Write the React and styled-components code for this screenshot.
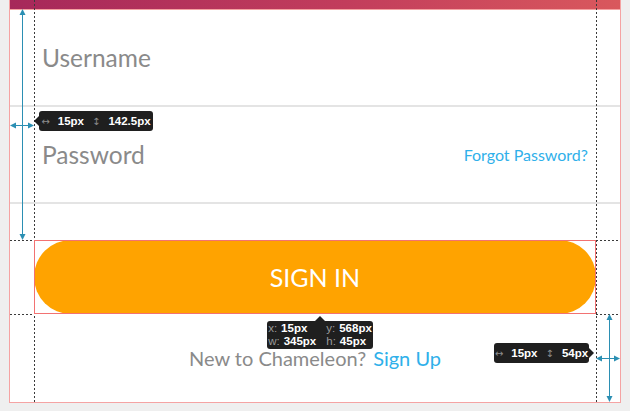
import React from 'react';
import styled, { createGlobalStyle, css } from 'styled-components';

const GlobalStyle = createGlobalStyle`
  html, body {
    margin: 0;
    padding: 0;
    background: #efefef;
  }
  body {
    font-family: Lato, "Open Sans", sans-serif;
  }
`;

const BLUE = '#2fb0ea';
const GRAY = '#8a8a8a';
const GUIDE = '#2b8fb3';

const Artboard = styled.div`
  position: relative;
  box-sizing: border-box;
  margin-left: 9px;
  width: 612px;
  height: 403px;
  background: #fff;
  border: 1px solid #f5a3a3;
  border-top: none;
  display: flex;
  flex-direction: column;
`;

const Header = styled.div`
  height: 9px;
  flex-shrink: 0;
  background: linear-gradient(90deg, #a6285a 0%, #c23d5c 55%, #d9585d 100%);
  border-bottom: 1px solid #f5a3a3;
`;

const Field = styled.div`
  box-sizing: border-box;
  flex-shrink: 0;
  height: 97px;
  border-bottom: 2px solid #e4e4e4;
  padding: 0 32px;
  display: flex;
  align-items: center;
  justify-content: space-between;
`;

const Placeholder = styled.span`
  font-size: 24.5px;
  color: ${GRAY};
`;

const Link = styled.span`
  color: ${BLUE};
  font-size: ${p => p.$size || 16}px;
`;

const Spacer = styled.div`
  flex-shrink: 0;
  height: 36px;
`;

const Button = styled.div`
  flex-shrink: 0;
  margin: 0 24px;
  height: 74px;
  border-radius: 37px;
  background: #ffa300;
  color: #fff;
  font-size: 25px;
  display: flex;
  align-items: center;
  justify-content: center;
`;

const Footer = styled.div`
  flex-shrink: 0;
  height: 88px;
  display: flex;
  align-items: center;
  justify-content: center;
  gap: 7px;
  font-size: 20px;
  color: ${GRAY};
`;

/* --- inspector overlay --- */

const Overlay = styled.div`
  position: absolute;
  inset: 0;
  pointer-events: none;
`;

const VDash = styled.div`
  position: absolute;
  left: ${p => p.$x}px;
  top: ${p => p.$y}px;
  width: 1px;
  height: ${p => p.$len}px;
  background-image: repeating-linear-gradient(to bottom, #3a3a3a 0 2px, transparent 2px 4px);
`;

const HDash = styled.div`
  position: absolute;
  left: ${p => p.$x}px;
  top: ${p => p.$y}px;
  height: 1px;
  width: ${p => p.$len}px;
  background-image: repeating-linear-gradient(to right, #3a3a3a 0 2px, transparent 2px 4px);
`;

const Selection = styled.div`
  position: absolute;
  left: 24px;
  top: 240px;
  width: 562px;
  height: 74px;
  box-sizing: border-box;
  border: 1px solid #f27272;
`;

const MeasureSvg = styled.svg`
  position: absolute;
  overflow: visible;
`;

const Measure = ({ x, y, len, vertical }) => {
  const w = vertical ? 9 : len;
  const h = vertical ? len : 9;
  const style = vertical
    ? { left: x - 4, top: y, width: w, height: h }
    : { left: x, top: y - 4, width: w, height: h };
  return (
    <MeasureSvg style={style} viewBox={`0 0 ${w} ${h}`}>
      {vertical ? (
        <g fill={GUIDE} stroke={GUIDE}>
          <line x1="4.5" y1="1" x2="4.5" y2={len - 1} strokeWidth="1" />
          <path d="M4.5 0 L1.5 6 L7.5 6 Z" stroke="none" />
          <path d={`M4.5 ${len} L1.5 ${len - 6} L7.5 ${len - 6} Z`} stroke="none" />
        </g>
      ) : (
        <g fill={GUIDE} stroke={GUIDE}>
          <line x1="1" y1="4.5" x2={len - 1} y2="4.5" strokeWidth="1" />
          <path d="M0 4.5 L6 1.5 L6 7.5 Z" stroke="none" />
          <path d={`M${len} 4.5 L${len - 6} 1.5 L${len - 6} 7.5 Z`} stroke="none" />
        </g>
      )}
    </MeasureSvg>
  );
};

const Tip = styled.div`
  position: absolute;
  left: ${p => p.$x}px;
  top: ${p => p.$y}px;
  width: ${p => p.$w}px;
  height: ${p => p.$h}px;
  box-sizing: border-box;
  background: #1f1f1f;
  border-radius: 3px;
  color: #fff;
  font-family: "Liberation Sans", "DejaVu Sans", sans-serif;
  font-weight: bold;
  font-size: 11.5px;
  display: flex;
  align-items: center;
  justify-content: center;
  gap: 8px;

  &::before {
    content: '';
    position: absolute;
    border: 5px solid transparent;
    ${p => p.$point === 'left' && css`
      right: 100%;
      top: 50%;
      margin-top: -5px;
      border-right-color: #1f1f1f;
    `}
    ${p => p.$point === 'right' && css`
      left: 100%;
      top: 50%;
      margin-top: -5px;
      border-left-color: #1f1f1f;
    `}
    ${p => p.$point === 'up' && css`
      bottom: 100%;
      left: 50%;
      margin-left: -5px;
      border-bottom-color: #1f1f1f;
    `}
  }
`;

const Glyph = styled.span`
  color: #8c8c8c;
  font-family: "DejaVu Sans", sans-serif;
  font-weight: normal;
  font-size: 10px;
`;

const TipGrid = styled.div`
  display: grid;
  grid-template-columns: auto auto;
  column-gap: 10px;
  line-height: 13px;
`;

const Key = styled.span`
  color: #9a9a9a;
  font-weight: normal;
  margin-right: 4px;
`;

const SizeTip = ({ x, y, w, point, width, height }) => (
  <Tip $x={x} $y={y} $w={w} $h={20} $point={point}>
    <Glyph>↔</Glyph>
    <span>{width}</span>
    <Glyph>↕</Glyph>
    <span>{height}</span>
  </Tip>
);

export default function App() {
  return (
    <>
      <GlobalStyle />
      <Artboard>
        <Header />
        <Field>
          <Placeholder>Username</Placeholder>
        </Field>
        <Field>
          <Placeholder>Password</Placeholder>
          <Link>Forgot Password?</Link>
        </Field>
        <Spacer />
        <Button>SIGN IN</Button>
        <Footer>
          <span>New to Chameleon?</span>
          <Link $size={20}>Sign Up</Link>
        </Footer>

        <Overlay>
          <VDash $x={24} $y={0} $len={402} />
          <VDash $x={586} $y={0} $len={402} />
          <HDash $x={0} $y={240} $len={24} />
          <HDash $x={586} $y={240} $len={24} />
          <HDash $x={0} $y={314} $len={24} />
          <HDash $x={586} $y={314} $len={24} />
          <Selection />

          <Measure vertical x={12} y={9} len={231} />
          <Measure x={0} y={125} len={24} />
          <Measure vertical x={599} y={314} len={88} />
          <Measure x={586} y={358} len={24} />

          <SizeTip x={29} y={111} w={114} point="left" width="15px" height="142.5px" />
          <SizeTip x={484} y={343} w={95} point="right" width="15px" height="54px" />

          <Tip $x={257} $y={321} $w={106} $h={28} $point="up">
            <TipGrid>
              <span><Key>x:</Key>15px</span>
              <span><Key>y:</Key>568px</span>
              <span><Key>w:</Key>345px</span>
              <span><Key>h:</Key>45px</span>
            </TipGrid>
          </Tip>
        </Overlay>
      </Artboard>
    </>
  );
}
